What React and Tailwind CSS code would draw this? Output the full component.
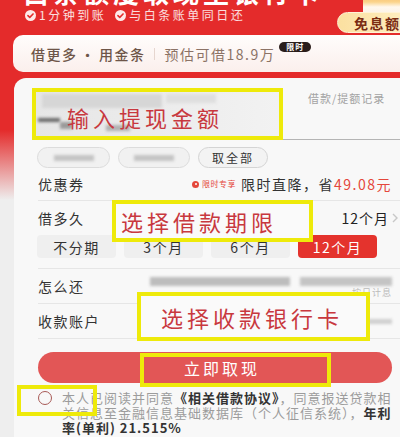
import React from "react";

const FONT = "font-['Noto_Sans_CJK_SC','Noto_Sans',sans-serif]";
const LABEL = "text-[14px] leading-[16px] tracking-[1.5px] text-[#333]";
const NOTE = "text-[22px] leading-[24px] tracking-[4px] text-[#c8383e] whitespace-nowrap";

function Check() {
  return (
    <svg width="11" height="11" viewBox="0 0 12 12" className="shrink-0">
      <circle cx="6" cy="6" r="6" fill="#fff" fillOpacity="0.9" />
      <path d="M3.2 6.1 L5.2 8 L8.8 4.3" stroke="#e42b2b" strokeWidth="1.7" fill="none" strokeLinecap="round" strokeLinejoin="round" />
    </svg>
  );
}

function Blur({ className }) {
  return <div className={`blur-[1.5px] ${className}`} />;
}

// yellow annotation frame drawn over the screenshot
function Mark({ className, children }) {
  return (
    <div className={`absolute flex items-center border-[4px] border-[#eeea0a] ${className}`}>
      {children}
    </div>
  );
}

export default function App() {
  return (
    <div className={`${FONT} relative flex h-[437px] w-[400px] flex-col overflow-hidden bg-[linear-gradient(180deg,#e42b2b_0px,#e42b2b_130px,#eeeeee_200px)]`}>
      {/* ── Header ── */}
      <div className="flex h-[35px] shrink-0">
        <div className="flex-1 pl-[23px]">
          <div className="-mt-[21px] whitespace-nowrap text-[26px] font-bold leading-[26px] tracking-[4px] text-white">
            白条额度取现至银行卡
          </div>
          <div className="mt-[4px] flex items-center whitespace-nowrap pl-[2px] text-[12px] leading-[12px] tracking-[2.5px] text-white/85">
            <Check />
            <span className="ml-[3px]">1分钟到账</span>
            <span className="ml-[9px]"><Check /></span>
            <span className="ml-[3px]">与白条账单同日还</span>
          </div>
        </div>
        <div className="relative w-[63px] shrink-0">
          <div className="absolute -top-[10px] left-[26px] h-[40px] w-[44px] rounded-[10px] bg-[linear-gradient(180deg,#f3a94e_0px,#fbd48c_12px,#fff8ee_17px,#efe2d8_40px)]" />
          <div className="absolute left-0 top-[12px] flex h-[21px] w-[80px] items-center rounded-full border border-[#fff3d6] bg-[linear-gradient(90deg,#fbe0a0,#fff0c6)] pl-[16px]">
            <span className="whitespace-nowrap text-[14px] font-bold leading-[14px] tracking-[1.5px] text-[#7a2c12]">免息额度</span>
          </div>
        </div>
      </div>

      {/* ── Promo card ── */}
      <div className="-mr-[20px] ml-[13px] flex h-[37px] shrink-0 items-center rounded-[10px] bg-[linear-gradient(180deg,#fffdfc,#fbefec)] pl-[18px]">
        <span className="whitespace-nowrap text-[14px] font-medium leading-[16px] tracking-[1.5px] text-[#6e5548]">
          借更多<span className="mx-[3px]">·</span>用金条
        </span>
        <span className="ml-[8px] h-[12px] w-px bg-[#e6d6cf]" />
        <span className="ml-[10px] whitespace-nowrap text-[14px] leading-[16px] tracking-[1.5px] text-[#8c7366]">预估可借18.9万</span>
        <span className="mb-[14px] ml-[4px] rounded-full bg-[#2a1d1a] px-[7px] text-[8px] font-bold leading-[10px] tracking-[1px] text-white">限时</span>
      </div>

      {/* ── Main card ── */}
      <div className="ml-[14px] mt-[6px] flex-1 rounded-tl-[12px] bg-[#f8f8f8] pl-[24px]">
        {/* amount input */}
        <div className="mt-[10px] flex h-[52px]">
          <div className="relative -ml-[6px] flex h-[52px] w-[251px] shrink-0 items-center overflow-hidden border-[4px] border-[#eeea0a] bg-[linear-gradient(90deg,#e6e6e6,#f2f2f2)]">
            <Blur className="absolute left-[6px] top-[2px] h-[14px] w-[120px] bg-[#d6d6d6]" />
            <Blur className="absolute left-[130px] top-[2px] h-[9px] w-[50px] bg-[#dedede]" />
            <Blur className="absolute left-[2px] top-[26px] h-[4px] w-[22px] bg-[#6a6a6a]" />
            <Blur className="absolute left-[24px] top-[30px] h-[7px] w-[12px] bg-[#9a9a9a]" />
            <Blur className="absolute left-[70px] top-[33px] h-[6px] w-[24px] bg-[#b0b0b0]" />
            <span className={`relative pl-[31px] pt-[6px] ${NOTE}`}>输入提现金额</span>
          </div>
          <div className="flex-1 border-b border-[#b5b5b5] pl-[25px] pt-[3px] text-[11px] leading-[14px] tracking-[1px] whitespace-nowrap text-[#a3a3a3]">
            借款/提额记录
          </div>
        </div>

        {/* quick chips */}
        <div className="-ml-[1px] mt-[7px] flex h-[21px] gap-[8px]">
          <div className="flex w-[73px] items-center justify-center rounded-full border border-[#dcdcdc] bg-[#f1f1f1]">
            <Blur className="h-[6px] w-[40px] bg-[#c4c4c4]" />
          </div>
          <div className="flex w-[72px] items-center justify-center rounded-full border border-[#dcdcdc] bg-[#f1f1f1]">
            <Blur className="h-[6px] w-[40px] bg-[#c4c4c4]" />
          </div>
          <div className="flex w-[70px] items-center justify-center rounded-full border border-[#d4d4d4] bg-[#f3f3f3] text-[12px] leading-[14px] tracking-[2px] text-[#333]">
            取全部
          </div>
        </div>

        {/* coupon */}
        <div className="flex h-[33px] items-center justify-between border-b border-[#e6e6e6] pr-[8px]">
          <span className={LABEL}>优惠券</span>
          <div className="flex items-center whitespace-nowrap">
            <span className="flex h-[7px] w-[7px] items-center justify-center rounded-full bg-[#e4473b]">
              <span className="h-[2px] w-[2px] rounded-full bg-white" />
            </span>
            <span className="ml-[3px] text-[8px] leading-[10px] tracking-[0.5px] text-[#e4473b]">限时专享</span>
            <span className="ml-[5px] text-[14px] leading-[16px] tracking-[1.5px] text-[#333]">
              限时直降，省<span className="text-[#e4473b]">49.08元</span>
            </span>
          </div>
        </div>

        {/* term */}
        <div className="border-b border-[#e6e6e6] pb-[10px]">
          <div className="relative flex h-[34px] items-center justify-between">
            <span className={LABEL}>借多久</span>
            <div className="flex items-center">
              <span className="text-[14px] leading-[16px] tracking-[1px] text-[#222]">12个月</span>
              <svg width="10" height="12" viewBox="0 0 10 12" className="ml-[1px]">
                <path d="M3 2 L7 6 L3 10" stroke="#c8c8c8" strokeWidth="1.4" fill="none" />
              </svg>
            </div>
            <Mark className="-top-[1px] left-[74px] h-[42px] w-[201px] bg-[#fafafa] pl-[5px]">
              <span className={NOTE}>选择借款期限</span>
            </Mark>
          </div>
          <div className="-ml-[1px] flex h-[23px] gap-[8px]">
            {["不分期", "3个月", "6个月", "12个月"].map((t, i) => (
              <div
                key={t}
                className={`flex w-[79px] items-center justify-center rounded-[4px] text-[14px] leading-[16px] tracking-[1.5px] ${
                  i === 3 ? "bg-[#e4332d] text-white" : "bg-[#efefef] text-[#333]"
                }`}
              >
                {t}
              </div>
            ))}
          </div>
        </div>

        {/* repayment */}
        <div className="flex h-[35px] items-center justify-between border-b border-[#e6e6e6] pr-[8px]">
          <span className={LABEL}>怎么还</span>
          <div className="flex flex-col items-end pt-[2px]">
            <div className="flex gap-[10px]">
              <Blur className="h-[9px] w-[140px] bg-[#bdbdbd]" />
              <Blur className="h-[9px] w-[92px] bg-[#c4c4c4]" />
            </div>
            <span className="mt-[2px] text-[9px] leading-[10px] tracking-[1px] text-[#bbb]">按日计息</span>
          </div>
        </div>

        {/* account */}
        <div className="relative flex h-[35px] items-center justify-between border-b border-[#e6e6e6] pr-[8px]">
          <span className={LABEL}>收款账户</span>
          <Blur className="h-[5px] w-[36px] bg-[#cfcfcf]" />
          <Mark className="-top-[12px] left-[99px] h-[49px] w-[233px] bg-[#fafafa] pl-[20px]">
            <span className={NOTE}>选择收款银行卡</span>
          </Mark>
        </div>

        {/* submit */}
        <div className="relative mr-[8px] mt-[13px] flex h-[31px] items-center justify-center rounded-full bg-[#e25656] pl-[14px]">
          <span className="text-[16px] leading-[18px] tracking-[3px] text-white">立即取现</span>
          <Mark className="left-[102px] top-[1px] h-[34px] w-[191px]" />
        </div>

        {/* agreement */}
        <div className="relative mt-[7px] flex">
          <span className="mt-[1px] h-[14px] w-[14px] shrink-0 rounded-full border-[1.5px] border-[#a85a56]" />
          <div className="ml-[10px] whitespace-nowrap text-[13px] leading-[15px] tracking-[1px] text-[#9c9c9c]">
            <div>
              本人已阅读并同意<span className="font-bold text-[#333]">《相关借款协议》</span>，同意报送贷款相
            </div>
            <div>
              关信息至金融信息基础数据库（个人征信系统），<span className="font-bold text-[#333]">年利</span>
            </div>
            <div className="font-bold text-[#333]">率(单利) 21.515%</div>
          </div>
          <Mark className="-left-[21px] -top-[5px] h-[31px] w-[80px]" />
        </div>
      </div>
    </div>
  );
}
